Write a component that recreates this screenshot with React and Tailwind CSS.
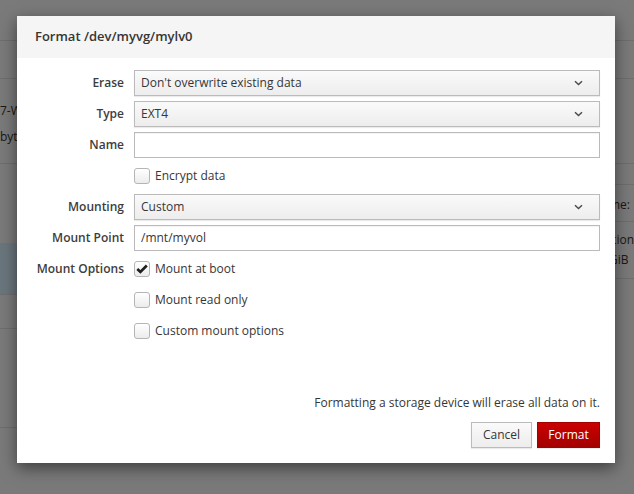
import React from "react";

const Chevron = () => (
  <svg width="9" height="6" viewBox="0 0 9 6" className="shrink-0">
    <path d="M1 1.2 L4.5 4.6 L8 1.2" fill="none" stroke="#4a4a4a" strokeWidth="1.4" />
  </svg>
);

const Select = ({ value }) => (
  <div className="flex h-[26px] items-center justify-between border border-[#bbbbbb] bg-gradient-to-b from-[#fafafa] to-[#ededed] pl-[6px] pr-[16px] text-[12px] text-[#363636] shadow-[0_1px_1px_rgba(3,3,3,0.08)]">
    <span>{value}</span>
    <Chevron />
  </div>
);

const TextInput = ({ value }) => (
  <div className="flex h-[26px] items-center border border-[#bababa] bg-white pl-[6px] text-[12px] text-[#363636] shadow-[inset_0_1px_1px_rgba(3,3,3,0.05)]">
    {value}
  </div>
);

const Checkbox = ({ label, checked }) => (
  <div className="flex h-[26px] items-center gap-[5px]">
    <span className="flex h-[16px] w-[16px] items-center justify-center rounded-[3px] border border-[#b5b5b5] bg-gradient-to-b from-white to-[#ececec]">
      {checked && (
        <svg width="12" height="10" viewBox="0 0 12 10">
          <path d="M1.3 5 L4.4 8 L10.8 1.5" fill="none" stroke="#1e1e1e" strokeWidth="2.6" />
        </svg>
      )}
    </span>
    <span className="text-[12px] text-[#363636]">{label}</span>
  </div>
);

const Label = ({ children }) => (
  <div className="flex h-[26px] items-center justify-end whitespace-nowrap text-[12px] font-semibold text-[#3d3d3d]">
    {children}
  </div>
);

// background page rows, dimmed by the overlay
const BgRow = ({ h, border = true, children, blue }) => (
  <div
    className={`flex flex-col justify-center ${border ? "border-b border-[#dcdcdc]" : ""} ${blue ? "bg-[#d5ecfb]" : ""}`}
    style={{ height: h }}
  >
    {children}
  </div>
);

export default function App() {
  return (
    <div className="relative h-[494px] w-[634px] overflow-hidden bg-[#f5f5f5] font-['Open_Sans',sans-serif]">
      {/* page underneath */}
      <div className="flex h-full text-[12px] text-[#333]">
        <div className="w-[317px]">
          <BgRow h={41} />
          <BgRow h={38} />
          <BgRow h={85}>
            <div className="mt-[6px] leading-[26px]">7-WD-WCC</div>
            <div className="leading-[26px]">bytes</div>
          </BgRow>
          <BgRow h={79} border={false} />
          <BgRow h={51} border={false} blue />
          <div className="h-[35px] border-t border-b border-[#dcdcdc]" />
          <BgRow h={99} />
        </div>
        <div className="flex-1">
          <BgRow h={41} />
          <BgRow h={38} />
          <BgRow h={85} />
          <BgRow h={21} />
          <BgRow h={37}>
            <div className="pl-[286px] pt-[3px]">Name:</div>
          </BgRow>
          <BgRow h={57}>
            <div className="pl-[279px] leading-[20px]">Location</div>
            <div className="pl-[285px] leading-[20px]">10 GiB</div>
          </BgRow>
        </div>
      </div>

      {/* overlay */}
      <div className="absolute inset-0 bg-black/50" />

      {/* dialog */}
      <div className="absolute left-[17px] top-[16px] w-[598px] bg-white shadow-[0_5px_15px_rgba(0,0,0,0.5)]">
        <div className="flex h-[42px] items-center bg-[#f5f5f5] pl-[18px] text-[13px] font-semibold text-[#363636]">
          Format /dev/myvg/mylv0
        </div>

        <div className="px-[15px] pt-[12px]">
          <div className="grid grid-cols-[92px_1fr] gap-x-[10px] gap-y-[5px]">
            <Label>Erase</Label>
            <Select value="Don't overwrite existing data" />
            <Label>Type</Label>
            <Select value="EXT4" />
            <Label>Name</Label>
            <TextInput value="" />
            <div />
            <Checkbox label="Encrypt data" />
            <Label>Mounting</Label>
            <Select value="Custom" />
            <Label>Mount Point</Label>
            <TextInput value="/mnt/myvol" />
            <Label>Mount Options</Label>
            <Checkbox label="Mount at boot" checked />
            <div />
            <Checkbox label="Mount read only" />
            <div />
            <Checkbox label="Custom mount options" />
          </div>

          <div className="pt-[50px] text-right text-[12px] leading-[18px] text-[#363636]">
            Formatting a storage device will erase all data on it.
          </div>
          <div className="flex justify-end gap-[5px] pb-[15px] pt-[10px]">
            <button className="h-[26px] w-[61px] border border-[#bbbbbb] bg-gradient-to-b from-[#fafafa] to-[#ededed] text-[12px] text-[#363636] shadow-[0_1px_1px_rgba(3,3,3,0.08)]">
              Cancel
            </button>
            <button className="h-[26px] w-[63px] border border-[#a30000] bg-gradient-to-b from-[#cc0000] to-[#a30000] text-[12px] text-white shadow-[0_1px_1px_rgba(3,3,3,0.08)]">
              Format
            </button>
          </div>
        </div>
      </div>
    </div>
  );
}
